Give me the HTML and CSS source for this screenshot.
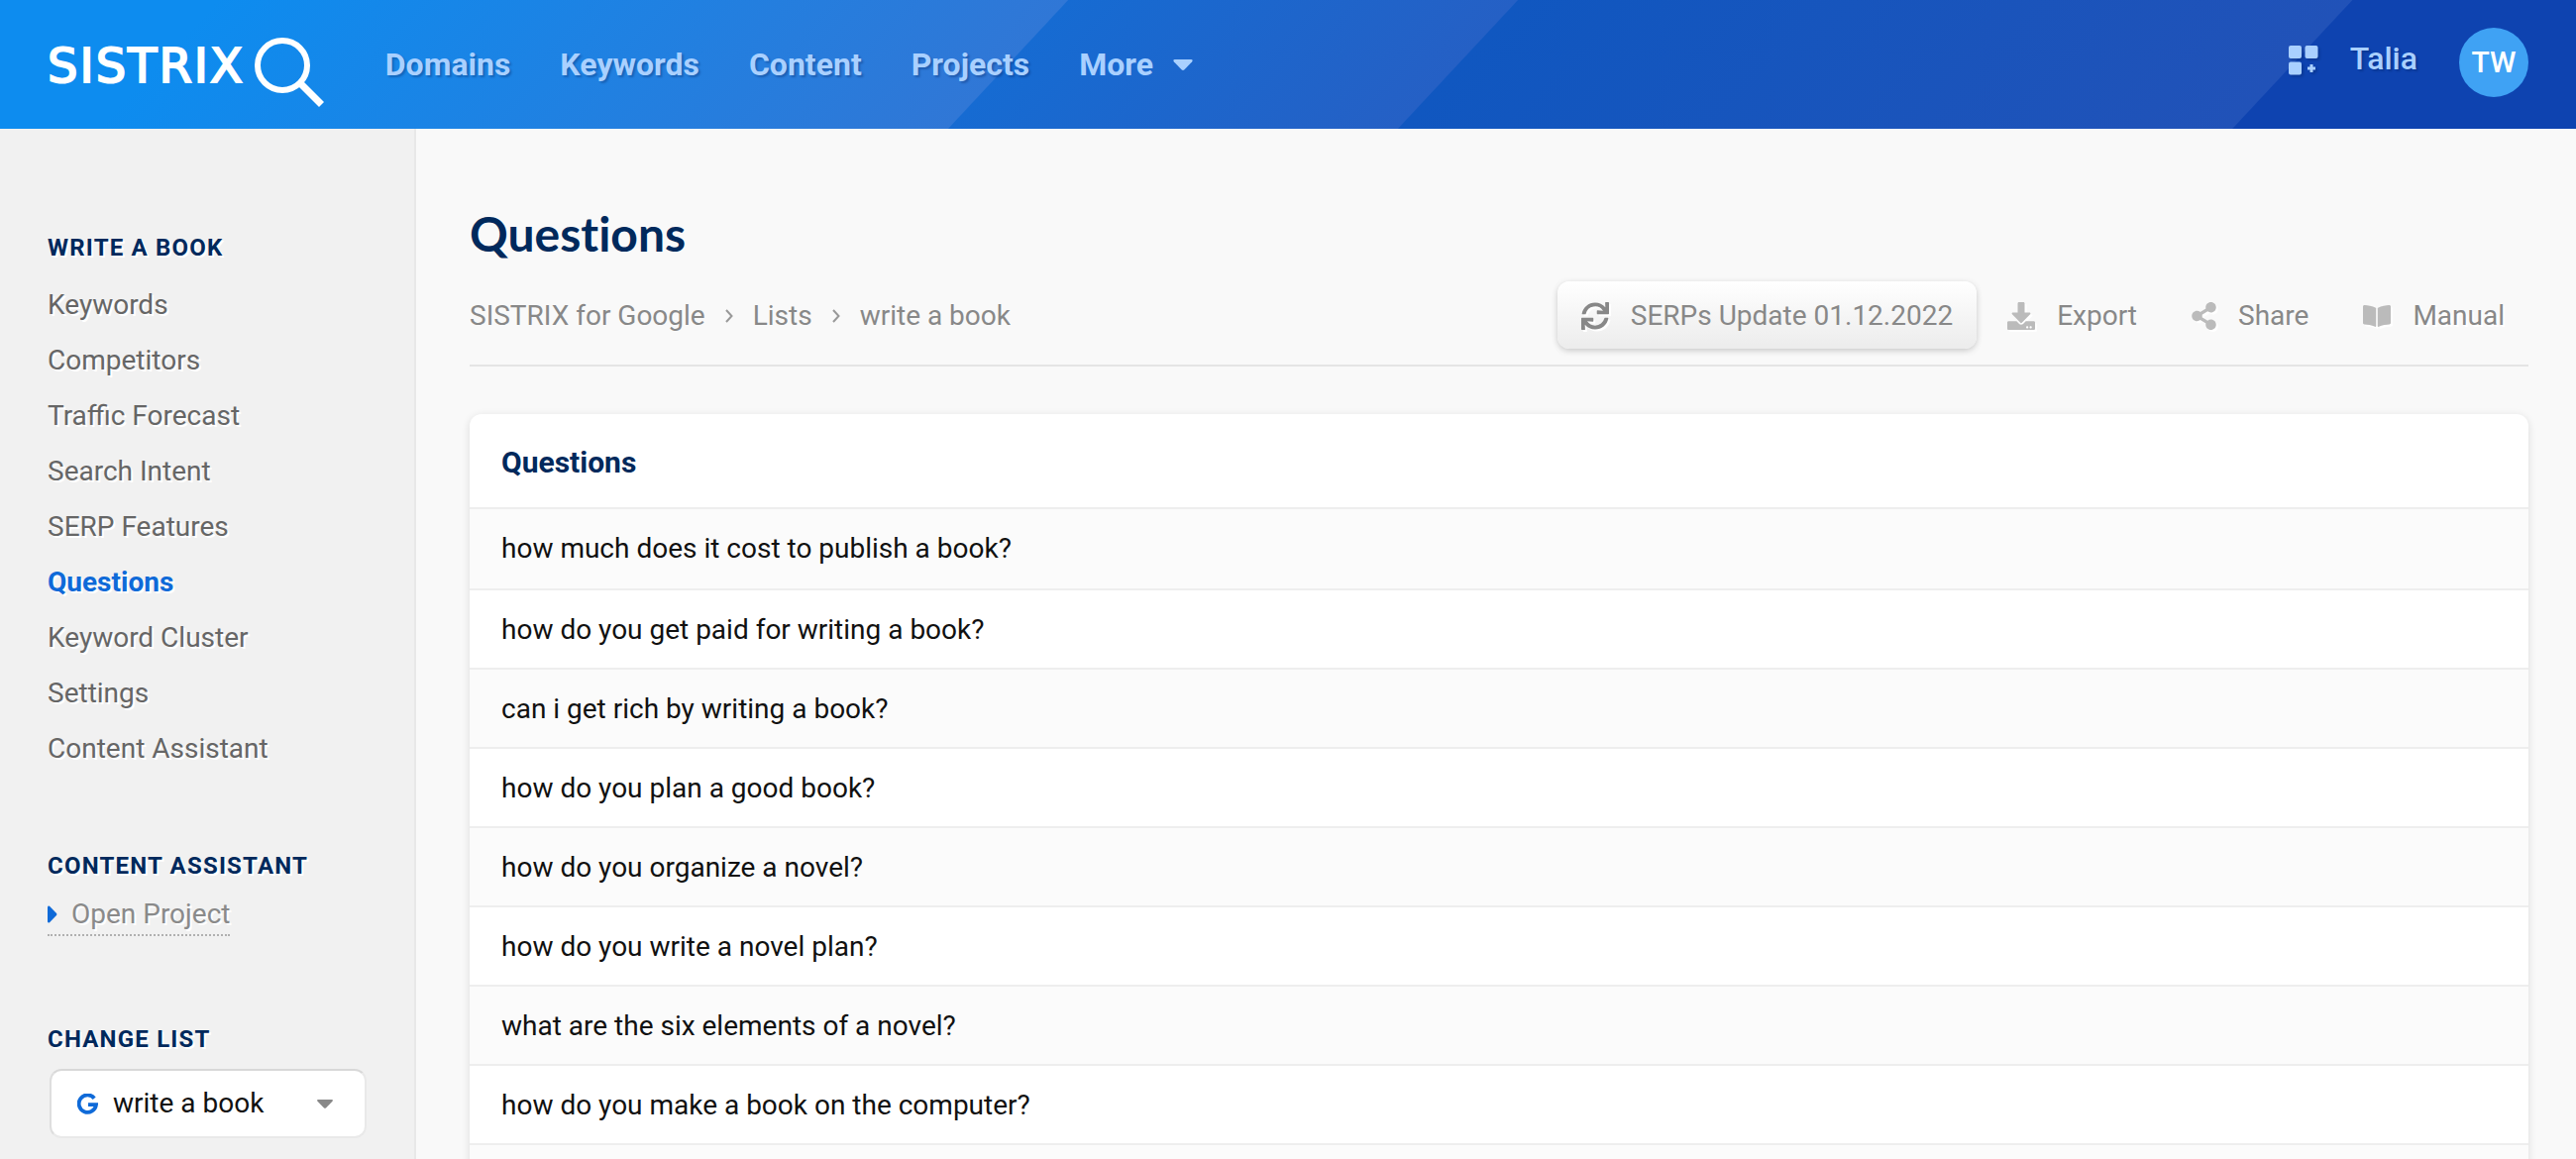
FILE: index.html
```html
<!DOCTYPE html>
<html lang="en">
<head>
<meta charset="utf-8">
<meta name="viewport" content="width=device-width, initial-scale=1">
<title>Questions – SISTRIX</title>
<link rel="stylesheet" href="styles.css">
</head>
<body>
<header class="topbar">
  <a class="logo" href="#">
    <span class="logo-text">SISTRIX</span>
    <svg class="logo-glass" viewBox="0 0 70 70" aria-hidden="true"><circle cx="28" cy="28" r="25" fill="none" stroke="#fff" stroke-width="6"/><path d="M46 46 67.500 67.500" stroke="#fff" stroke-width="7"/></svg>
  </a>
  <nav class="mainnav">
    <a href="#">Domains</a>
    <a href="#">Keywords</a>
    <a href="#">Content</a>
    <a href="#">Projects</a>
    <button type="button">More <svg class="caret" viewBox="0 0 20 11" aria-hidden="true"><path d="M1.500 0h17q2 .6.700 2.200l-7.700 8q-1.500 1.400-3 0l-7.700-8Q-.5.600 1.500 0z"/></svg></button>
  </nav>
  <div class="account">
    <button class="apps" type="button" aria-label="Apps"><svg viewBox="0 0 30 30" aria-hidden="true"><rect width="13" height="13" rx="2"/><rect x="16.500" width="13" height="13" rx="2"/><rect y="16.500" width="13" height="13" rx="2"/><path d="M21.500 19h3v2.500H27v3h-2.500V27h-3v-2.500H19v-3h2.500z"/></svg></button>
    <a class="user" href="#">Talia</a>
    <a class="avatar" href="#">TW</a>
  </div>
</header>
<div class="layout">
  <aside class="sidebar">
    <section>
      <h2>WRITE A BOOK</h2>
      <ul class="menu">
        <li><a href="#">Keywords</a></li>
        <li><a href="#">Competitors</a></li>
        <li><a href="#">Traffic Forecast</a></li>
        <li><a href="#">Search Intent</a></li>
        <li><a href="#">SERP Features</a></li>
        <li><a class="active" href="#">Questions</a></li>
        <li><a href="#">Keyword Cluster</a></li>
        <li><a href="#">Settings</a></li>
        <li><a href="#">Content Assistant</a></li>
      </ul>
    </section>
    <section>
      <h2>CONTENT ASSISTANT</h2>
      <a class="project" href="#"><svg viewBox="0 0 10 18" aria-hidden="true"><path d="M0 1.500Q.5 0 2 .8l7 7.200q.9 1 0 2l-7 7.200Q.5 18 0 16.500z"/></svg>Open Project</a>
    </section>
    <section>
      <h2><label for="list">CHANGE LIST</label></h2>
      <div class="picker">
        <select id="list"><option>write a book</option></select>
        <svg class="picker-g" viewBox="0 0 21 21" aria-hidden="true"><path d="M17.200 4.700A8.700 8.700 0 1 0 19 11.200H11" fill="none" stroke="#0f6ad8" stroke-width="3.800"/></svg>
        <svg class="picker-caret" viewBox="0 0 16 9" aria-hidden="true"><path d="M1 0h14q1.500.5.500 1.700L9.200 8.200q-1.200 1-2.400 0L.5 1.700Q-.5.500 1 0z"/></svg>
      </div>
    </section>
  </aside>
  <main class="content">
    <h1>Questions</h1>
    <div class="subhead">
      <nav class="crumbs" aria-label="Breadcrumb">
        <a href="#">SISTRIX for Google</a>
        <svg viewBox="0 0 8 14" aria-hidden="true"><path d="M1 1l5.500 6L1 13"/></svg>
        <a href="#">Lists</a>
        <svg viewBox="0 0 8 14" aria-hidden="true"><path d="M1 1l5.500 6L1 13"/></svg>
        <a href="#">write a book</a>
      </nav>
      <div class="tools">
        <button class="tool raised" type="button"><svg viewBox="0 0 512 512" aria-hidden="true"><path d="M440.650 12.570l4 82.770A247.160 247.160 0 0 0 255.830 8C134.730 8 33.910 94.920 12.290 209.820A12 12 0 0 0 24.090 224h49.050a12 12 0 0 0 11.670-9.260 175.910 175.910 0 0 1 317-56.940l-101.460-4.860a12 12 0 0 0-12.570 12v47.410a12 12 0 0 0 12 12H500a12 12 0 0 0 12-12V12a12 12 0 0 0-12-12h-47.370a12 12 0 0 0-11.980 12.570zM255.830 432a175.610 175.610 0 0 1-146-77.800l101.800 4.870a12 12 0 0 0 12.570-12v-47.400a12 12 0 0 0-12-12H12a12 12 0 0 0-12 12V500a12 12 0 0 0 12 12h47.350a12 12 0 0 0 12-12.600l-4.150-82.570A247.170 247.170 0 0 0 255.830 504c121.110 0 221.930-86.920 243.550-201.820a12 12 0 0 0-11.800-14.180h-49.050a12 12 0 0 0-11.670 9.260A175.860 175.860 0 0 1 255.830 432z"/></svg>SERPs Update 01.12.2022</button>
        <button class="tool" type="button"><svg viewBox="0 0 512 512" aria-hidden="true"><path d="M216 0h80c13.300 0 24 10.700 24 24v168h87.700c17.800 0 26.700 21.500 14.100 34.100L269.700 378.300c-7.500 7.500-19.800 7.500-27.300 0L90.100 226.100c-12.600-12.600-3.700-34.100 14.100-34.100H192V24c0-13.300 10.700-24 24-24zm296 376v112c0 13.300-10.700 24-24 24H24c-13.300 0-24-10.700-24-24V376c0-13.300 10.700-24 24-24h146.700l49 49c20.100 20.100 52.500 20.100 72.600 0l49-49H488c13.300 0 24 10.700 24 24zm-124 88c0-11-9-20-20-20s-20 9-20 20 9 20 20 20 20-9 20-20zm64 0c0-11-9-20-20-20s-20 9-20 20 9 20 20 20 20-9 20-20z"/></svg>Export</button>
        <button class="tool" type="button"><svg class="narrow" viewBox="0 0 448 512" aria-hidden="true"><path d="M352 320c-22.608 0-43.387 7.819-59.790 20.895l-102.486-64.054a96.551 96.551 0 0 0 0-41.683l102.486-64.054C308.613 184.181 329.392 192 352 192c53.019 0 96-42.981 96-96S405.019 0 352 0s-96 42.981-96 96c0 7.158.790 14.130 2.276 20.841L155.790 180.895C139.387 167.819 118.608 160 96 160c-53.019 0-96 42.981-96 96s42.981 96 96 96c22.608 0 43.387-7.819 59.790-20.895l102.486 64.054A96.301 96.301 0 0 0 256 416c0 53.019 42.981 96 96 96s96-42.981 96-96-42.981-96-96-96z"/></svg>Share</button>
        <a class="tool" href="#"><svg viewBox="0 0 576 512" aria-hidden="true"><path d="M542.220 32.050c-54.800 3.110-163.720 14.430-230.960 55.590-4.640 2.840-7.270 7.890-7.270 13.170v363.870c0 11.550 12.630 18.850 23.280 13.490 69.180-34.820 169.230-44.320 218.700-46.920 16.890-.890 30.020-14.430 30.020-30.660V62.750c.010-17.710-15.350-31.740-33.770-30.700zM264.730 87.640C197.500 46.480 88.580 35.170 33.780 32.050 15.360 31.010 0 45.040 0 62.750V400.600c0 16.240 13.130 29.780 30.020 30.660 49.490 2.600 149.590 12.110 218.770 46.950 10.620 5.350 23.210-1.940 23.210-13.460V100.630c0-5.290-2.620-10.140-7.270-12.990z"/></svg>Manual</a>
      </div>
    </div>
    <table class="card">
      <thead><tr><th scope="col">Questions</th></tr></thead>
      <tbody>
        <tr><td>how much does it cost to publish a book?</td></tr>
        <tr><td>how do you get paid for writing a book?</td></tr>
        <tr><td>can i get rich by writing a book?</td></tr>
        <tr><td>how do you plan a good book?</td></tr>
        <tr><td>how do you organize a novel?</td></tr>
        <tr><td>how do you write a novel plan?</td></tr>
        <tr><td>what are the six elements of a novel?</td></tr>
        <tr><td>how do you make a book on the computer?</td></tr>
        <tr><td></td></tr>
      </tbody>
    </table>
  </main>
</div>
</body>
</html>
```
FILE: styles.css
```css
* { box-sizing: border-box; }

body {
  margin: 0;
  height: 100vh;
  overflow: hidden;
  display: flex;
  flex-direction: column;
  background: #f9f9f9;
  color: #111;
  font: 28px/40px Roboto, "Liberation Sans", sans-serif;
}

a { color: inherit; text-decoration: none; }

button {
  border: 0;
  padding: 0;
  background: none;
  color: inherit;
  font: inherit;
}

svg { display: block; flex: none; }

/* Top bar */
.topbar {
  flex: none;
  height: 130px;
  padding: 0 48px;
  display: flex;
  align-items: center;
  background: linear-gradient(133deg,
    #0d8cef 0, #0d8cef 160px, #3077d6 788px,
    #166bd2 789px, #2560c5 1120px,
    #1057c0 1121px, #2152b8 1736px,
    #0e43b0 1737px);
  color: #a9d0ff;
  font-size: 32px;
  font-weight: 500;
}

.logo { display: flex; align-items: center; gap: 10px; color: #fff; }
.logo-text {
  padding-top: 2px;
  font: 48px/64px "DejaVu Sans", sans-serif;
  letter-spacing: 2px;
  -webkit-text-stroke: 2px #fff;
}
.logo-glass { width: 70px; height: 70px; margin-top: 16px; }

.mainnav {
  flex: 1;
  display: flex;
  gap: 50px;
  margin-left: 62px;
  font-weight: 700;
}
.mainnav, .user { text-shadow: 2px 2px 2px rgba(0, 30, 90, .3); }
.mainnav button { display: flex; align-items: center; gap: 20px; }
.caret { width: 20px; height: 11px; fill: currentColor; }

.account { display: flex; align-items: center; margin-bottom: 4px; }
.apps svg { width: 30px; height: 30px; margin-bottom: 4px; fill: currentColor; filter: drop-shadow(2px 2px 1px rgba(0, 30, 90, .3)); }
.user { margin: 0 42px 0 32px; padding-bottom: 8px; }
.avatar {
  width: 70px;
  height: 70px;
  border-radius: 50%;
  background: #3fa2f4;
  color: #fff;
  font-size: 30px;
  line-height: 70px;
  text-align: center;
}

/* Page columns */
.layout { flex: 1; display: flex; min-height: 0; }

.sidebar {
  flex: none;
  width: 420px;
  padding: 100px 48px 0;
  border-right: 2px solid #e8e8e8;
  background: #f1f1f1;
  color: #666;
  text-shadow: 2px 2px 0 #fff;
}
.sidebar section { margin-bottom: 84px; }
.sidebar h2 {
  margin: 0;
  color: #00295c;
  font-size: 24px;
  line-height: 40px;
  letter-spacing: .05em;
}
.menu {
  margin: 10px 0 0;
  padding: 0;
  list-style: none;
  line-height: 56px;
}
.sidebar section:first-child { margin-bottom: 70px; }
.menu a { display: block; }
.menu .active { color: #0f6ad8; font-weight: 700; }

.project {
  display: inline-flex;
  align-items: center;
  gap: 14px;
  margin-top: 9px;
  border-bottom: 2px dotted #b0b0b0;
  color: #8a8a8a;
}
.project svg { width: 10px; height: 18px; fill: #0f6ad8; }

.picker {
  display: grid;
  align-items: center;
  margin: 10px 0 0 2px;
}
.picker > * { grid-area: 1 / 1; }
.picker select {
  appearance: none;
  width: 100%;
  height: 70px;
  padding: 0 62px;
  border: 2px solid #e9e9e9;
  border-top-color: #d8d8d8;
  border-left-color: #dedede;
  border-radius: 12px;
  background: #fff;
  color: #111;
  font: inherit;
}
.picker svg { pointer-events: none; }
.picker-g { width: 21px; height: 21px; margin-left: 28px; }
.picker-caret { width: 16px; height: 9px; margin-right: 34px; justify-self: end; fill: #888; }

.content { flex: 1; min-width: 0; padding: 74px 48px 0 54px; }
.content h1 {
  margin: 0;
  color: #00295c;
  font: 700 48px/64px Lato, sans-serif;
  font-variant-ligatures: none;
}

.subhead {
  display: flex;
  align-items: center;
  justify-content: space-between;
  margin-top: 16px;
  padding-bottom: 16px;
  border-bottom: 2px solid #e5e5e5;
  color: #888;
}
.crumbs { display: flex; align-items: center; gap: 20px; padding-top: 2px; }
.crumbs svg { width: 8px; height: 14px; fill: none; stroke: #999; stroke-width: 2; }

.tools { display: flex; gap: 7px; text-shadow: 2px 2px 0 #fff; }
.tool {
  height: 68px;
  padding: 2px 24px 0;
  display: flex;
  align-items: center;
  gap: 22px;
  border-radius: 12px;
}
.tool svg { width: 28px; height: 28px; fill: #bbb; filter: drop-shadow(2px 2px 0 #fff); }
.tool .narrow { width: 25px; }
.raised {
  background: linear-gradient(#fff, #ececec);
  box-shadow: 0 2px 6px rgba(0, 0, 0, .2);
}
.raised svg { fill: #888; }

/* Questions table */
.card {
  width: 100%;
  margin-top: 48px;
  border-spacing: 0;
  border-radius: 12px;
  background: #fff;
  box-shadow: 0 2px 8px rgba(0, 0, 0, .12);
  text-align: left;
}
.card th { height: 94px; padding: 4px 32px 0; color: #00295c; font-size: 30px; }
.card td {
  height: 80px;
  padding: 20px 32px 18px;
  border-top: 2px solid #eee;
}
.card tbody tr:first-child td { padding-bottom: 20px; }
.card tbody tr:nth-child(odd) { background: #fbfbfb; }
```
